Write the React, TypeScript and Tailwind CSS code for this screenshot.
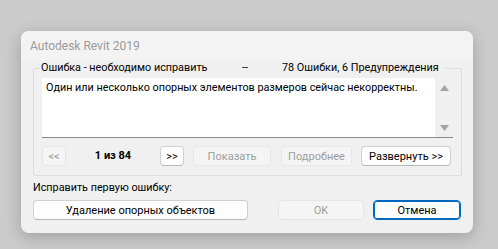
import React from 'react';

type BtnProps = { children: React.ReactNode; className?: string; disabled?: boolean; primary?: boolean };

function Btn({ children, className = '', disabled, primary }: BtnProps) {
  const tone = disabled
    ? 'border-[#e6e6e6] bg-[#f5f5f5] text-[#9d9d9d]'
    : primary
      ? 'border-[#0067c0] bg-[#fdfdfd] text-black outline outline-1 outline-[#0067c0] -outline-offset-2'
      : 'border-[#d0d0d0] border-b-[#b8b8b8] bg-[#fdfdfd] text-black';
  return (
    <div className={`flex h-[20px] shrink-0 items-center justify-center whitespace-nowrap rounded-[4px] border text-[11px] leading-none ${tone} ${className}`}>
      {children}
    </div>
  );
}

function Arrow({ down }: { down?: boolean }) {
  return (
    <svg width="9" height="6" viewBox="0 0 9 6" className="fill-[#a3a3a3]">
      <path d={down ? 'M0 0H9L4.5 6Z' : 'M4.5 0L9 6H0Z'} />
    </svg>
  );
}

export default function App() {
  return (
    <div className="h-[249px] w-[498px] bg-[#cbcbcb] pl-[21px] pt-[31px] font-['Roboto',sans-serif]">
      <div className="flex h-[202px] w-[452px] flex-col overflow-hidden rounded-[8px] bg-[#f0f0f0] shadow-[0_4px_16px_rgba(0,0,0,0.22)]">
        <div className="flex h-[29px] items-center bg-[#f3f3f3] pl-[9px] text-[12px] text-[#9b9b9b]">Autodesk Revit 2019</div>

        <div className="flex flex-col px-[12px] pt-[1px]">
          <fieldset className="h-[115px] w-[429px] min-w-0 rounded-[2px] border border-[#dcdcdc] px-[8px] pb-0 pt-0">
            <legend className="ml-[-2px] block w-[405px] whitespace-nowrap px-[1px] text-[10.8px] leading-[14px] text-black">
              <div className="flex items-center">
                <span className="w-[201px]">Ошибка - необходимо исправить</span>
                <span className="w-[40px]">--</span>
                <span>78 Ошибки, 6 Предупреждения</span>
              </div>
            </legend>

            <div className="mt-[3px] flex h-[60px] w-[411px] border-b border-[#8a8a8a] bg-white">
              <div className="flex-1 whitespace-nowrap pl-[4px] pt-[2px] text-[10.8px] text-black">
                Один или несколько опорных элементов размеров сейчас некорректны.
              </div>
              <div className="flex w-[18px] flex-col items-center justify-between bg-[#f0f0f0] pb-[6px] pt-[7px]">
                <Arrow />
                <Arrow down />
              </div>
            </div>

            <div className="mt-[8px] flex items-center">
              <Btn disabled className="w-[24px]">&lt;&lt;</Btn>
              <span className="w-[94px] text-center text-[11px] font-bold text-black">1 из 84</span>
              <Btn className="w-[24px]">&gt;&gt;</Btn>
              <Btn disabled className="ml-[9px] w-[78px]">Показать</Btn>
              <Btn disabled className="ml-[10px] w-[71px]">Подробнее</Btn>
              <Btn className="ml-[9px] w-[90px]">Развернуть &gt;&gt;</Btn>
            </div>
          </fieldset>

          <div className="mt-[4px] text-[10.8px] text-black">Исправить первую ошибку:</div>

          <div className="mt-[4px] flex items-center">
            <Btn className="w-[215px]">Удаление опорных объектов</Btn>
            <Btn disabled className="ml-[30px] w-[86px]">OK</Btn>
            <Btn primary className="ml-[9px] w-[88px]">Отмена</Btn>
          </div>
        </div>
      </div>
    </div>
  );
}
